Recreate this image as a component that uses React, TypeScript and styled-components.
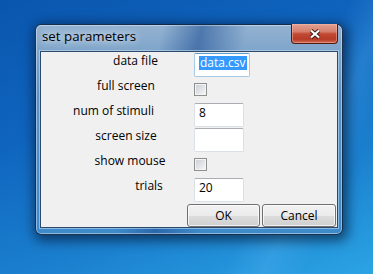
import styled, { createGlobalStyle } from "styled-components";

const GlobalStyle = createGlobalStyle`
  html, body {
    margin: 0;
    padding: 0;
    overflow: hidden;
  }
  body {
    font-family: "Segoe UI", "Open Sans", sans-serif;
  }
`;

type Field =
  | { label: string; center: number; kind: "entry"; value: string; width: number; focused?: boolean }
  | { label: string; center: number; kind: "check" };

// center = x of the label's middle, measured from the client area's left edge
const fields: Field[] = [
  { label: "data file", center: 94.5, kind: "entry", value: "data.csv", width: 56, focused: true },
  { label: "full screen", center: 85, kind: "check" },
  { label: "num of stimuli", center: 72.5, kind: "entry", value: "8", width: 50 },
  { label: "screen size", center: 85, kind: "entry", value: "", width: 50 },
  { label: "show mouse", center: 89, kind: "check" },
  { label: "trials", center: 108, kind: "entry", value: "20", width: 50 },
];

const App = () => {
  return (
    <>
      <GlobalStyle />
      <Desktop>
        <Window>
          <TitleBar>
            <Title>set parameters</Title>
            <CloseButton aria-label="Close">
              <svg width="12" height="10" viewBox="0 0 12 10">
                <path d="M2 1.5 L10 8.5 M10 1.5 L2 8.5" stroke="#3b1a14" strokeWidth="4" />
                <path d="M2 1.5 L10 8.5 M10 1.5 L2 8.5" stroke="#fff" strokeWidth="2.2" />
              </svg>
            </CloseButton>
          </TitleBar>
          <Client>
            <Form>
              {fields.map((f) => (
                <FieldRow key={f.label} f={f} />
              ))}
            </Form>
            <ButtonRow>
              <Button $width={73}>OK</Button>
              <Button $width={74}>Cancel</Button>
            </ButtonRow>
          </Client>
        </Window>
      </Desktop>
    </>
  );
};

const FieldRow = ({ f }: { f: Field }) => (
  <>
    <Label $width={f.center * 2}>{f.label}</Label>
    {f.kind === "check" ? (
      <Check />
    ) : (
      <Entry $width={f.width} $focused={!!f.focused}>
        {f.focused ? <Selected>{f.value}</Selected> : f.value}
      </Entry>
    )}
  </>
);

const Desktop = styled.div`
  width: 373px;
  height: 274px;
  box-sizing: border-box;
  padding: 24px 0 0 35px;
  background:
    linear-gradient(115deg, transparent 70%, rgba(120, 200, 255, 0.18) 78%, transparent 86%),
    linear-gradient(160deg, #0a56ae 0%, #0f64bd 35%, #1b80cf 70%, #2ba4e4 100%);
`;

const Window = styled.div`
  width: 308px;
  height: 211px;
  box-sizing: border-box;
  display: flex;
  flex-direction: column;
  padding: 0 4px 6px 4px;
  border: 1px solid rgba(8, 28, 56, 0.85);
  border-radius: 6px;
  background:
    linear-gradient(103deg, transparent 36%, rgba(25, 75, 145, 0.55) 47%, transparent 60%),
    linear-gradient(180deg, #93b2d1 0px, #7fa5ca 26px, #5d93c6 70px, #3d8acb 100%);
  box-shadow:
    inset 0 0 0 1px rgba(255, 255, 255, 0.4),
    2px 3px 12px 3px rgba(0, 10, 30, 0.55);
`;

const TitleBar = styled.div`
  height: 26px;
  display: flex;
  align-items: flex-start;
  justify-content: space-between;
`;

const Title = styled.span`
  padding: 3px 0 0 2px;
  font-size: 13.3px;
  line-height: 17px;
  color: #000;
  text-shadow:
    0 0 7px rgba(255, 255, 255, 0.95),
    0 0 14px rgba(255, 255, 255, 0.7);
`;

const CloseButton = styled.div`
  width: 47px;
  height: 20px;
  margin-top: -1px;
  box-sizing: border-box;
  display: flex;
  align-items: center;
  justify-content: center;
  border: 1px solid #4f1b14;
  border-top: none;
  border-radius: 0 0 4px 4px;
  background: linear-gradient(180deg, #e3a193 0%, #d67e6c 40%, #c24a33 52%, #b63b27 80%, #d46a52 100%);
  box-shadow: inset 0 0 0 1px rgba(255, 190, 175, 0.45);
`;

const Client = styled.div`
  flex: 1;
  display: flex;
  flex-direction: column;
  border: 1px solid #2b4a6c;
  background: #f0f0f0;
  box-shadow: 0 0 0 1px rgba(200, 225, 245, 0.55);
`;

const Form = styled.div`
  display: grid;
  grid-template-columns: 153px auto;
  grid-auto-rows: 25px;
`;

const Label = styled.div<{ $width: number }>`
  width: ${(p) => p.$width}px;
  justify-self: start;
  align-self: start;
  text-align: center;
  white-space: nowrap;
  font-size: 12px;
  line-height: 17px;
  color: #000;
`;

const Entry = styled.div<{ $width: number; $focused: boolean }>`
  width: ${(p) => p.$width}px;
  height: 24px;
  align-self: end;
  justify-self: start;
  box-sizing: border-box;
  padding: 2px 0 0 4px;
  background: #fff;
  border: 1px solid ${(p) => (p.$focused ? "#a7cbe6" : "#dbdfe6")};
  border-top-color: ${(p) => (p.$focused ? "#5f9ccd" : "#abadb3")};
  border-radius: 2px;
  font-size: 12px;
  line-height: 14px;
  color: #000;
  white-space: nowrap;
`;

const Selected = styled.span`
  display: inline-block;
  padding: 0 1px;
  background: #3399ff;
  color: #fff;
`;

const Check = styled.div`
  width: 13px;
  height: 13px;
  align-self: center;
  justify-self: start;
  box-sizing: border-box;
  border: 1px solid #8e8f8f;
  background: linear-gradient(135deg, #c9cdd3 0%, #e2e4e7 55%, #f8f8f8 100%);
  box-shadow: inset 0 0 0 1px #f4f4f4;
`;

const ButtonRow = styled.div`
  display: flex;
  justify-content: flex-end;
  gap: 2px;
  margin-top: 2px;
  padding-right: 1px;
`;

const Button = styled.div<{ $width: number }>`
  width: ${(p) => p.$width}px;
  height: 23px;
  box-sizing: border-box;
  display: flex;
  align-items: center;
  justify-content: center;
  border: 1px solid #707070;
  border-radius: 3px;
  background: linear-gradient(180deg, #f2f2f2 0%, #ebebeb 50%, #dddddd 51%, #cfcfcf 100%);
  box-shadow: inset 0 0 0 1px rgba(255, 255, 255, 0.7);
  font-size: 12px;
  color: #000;
`;

export default App;
